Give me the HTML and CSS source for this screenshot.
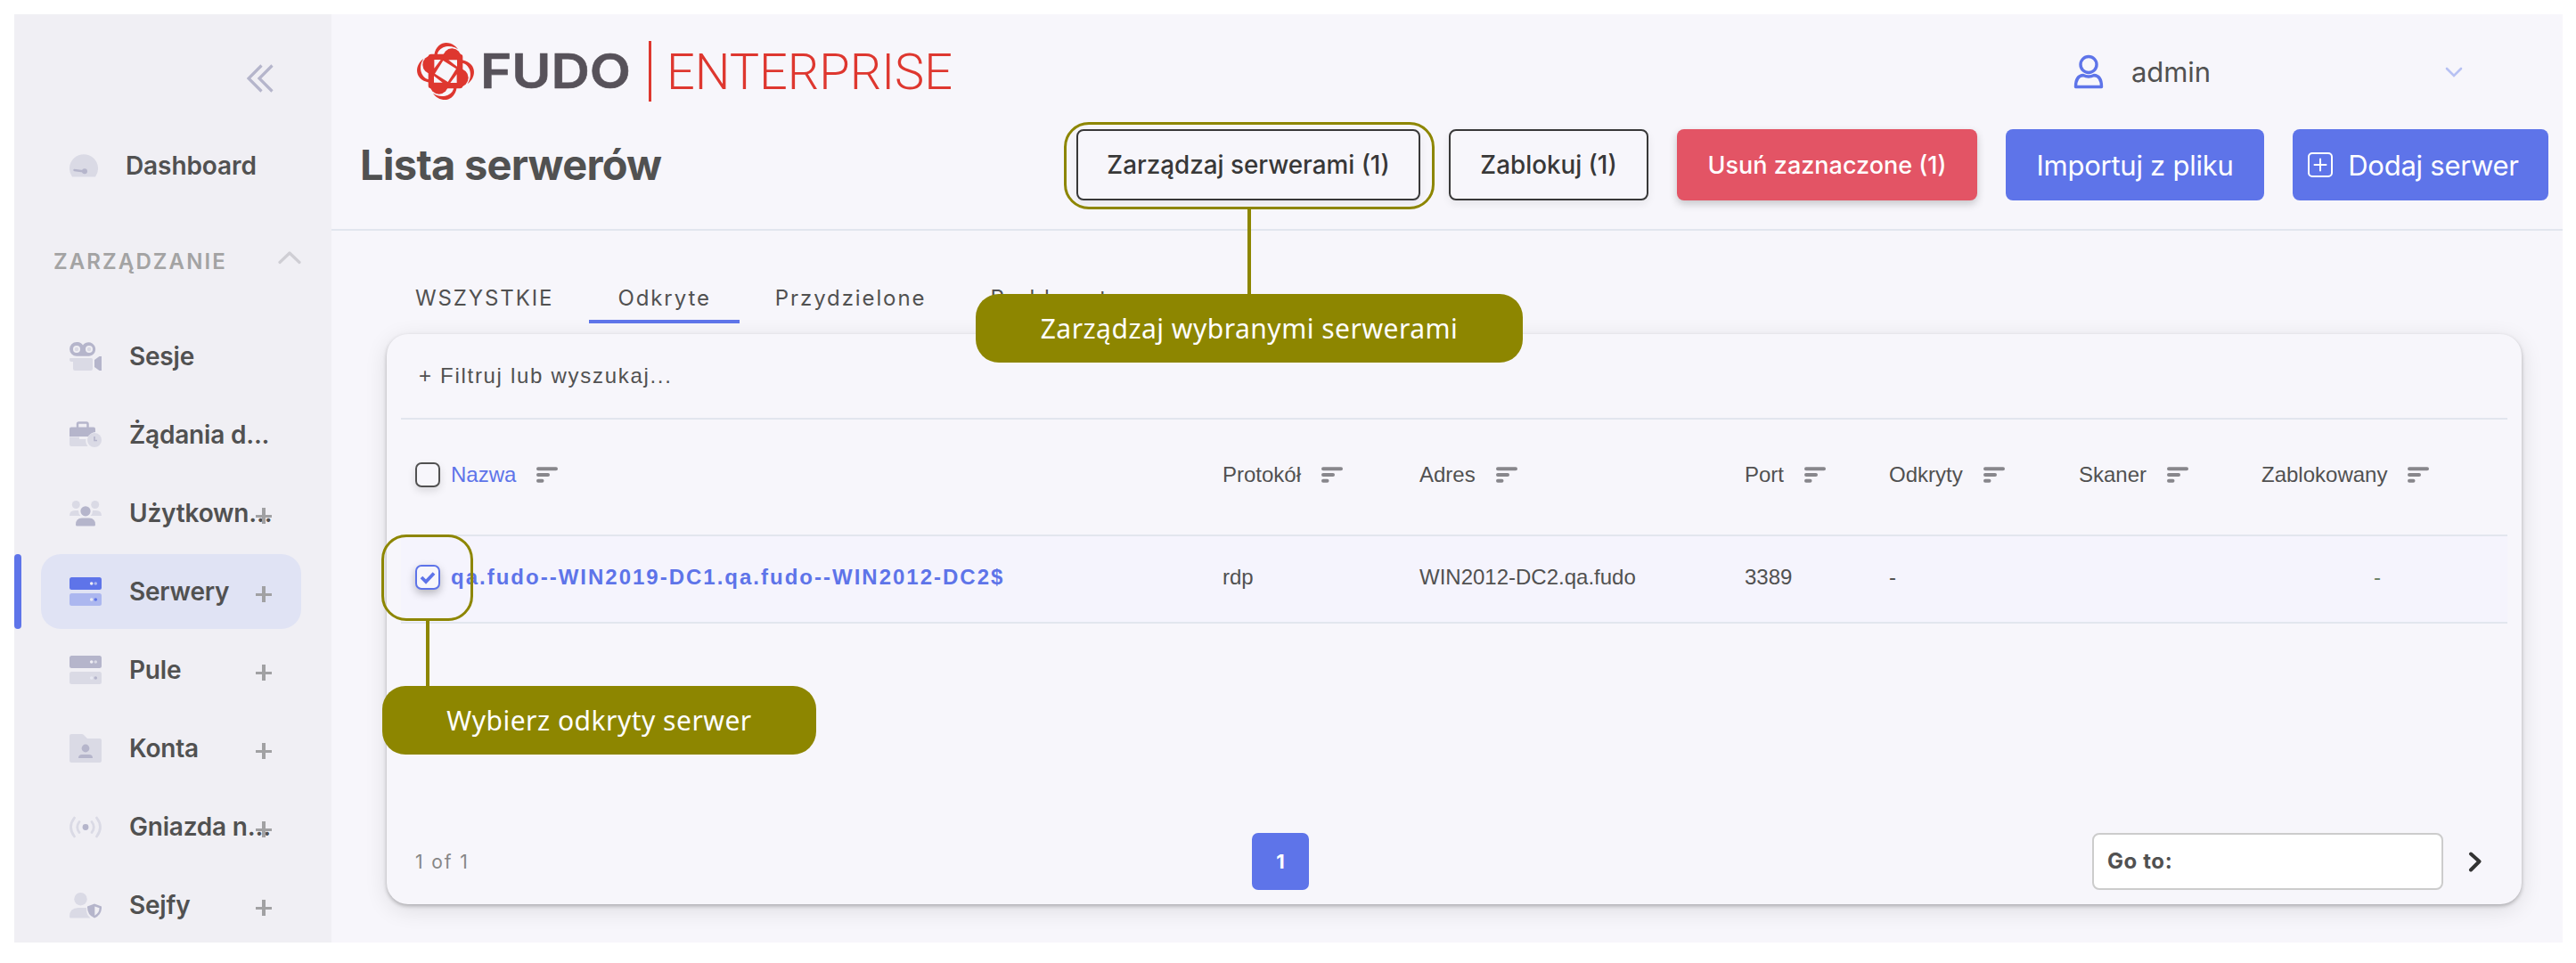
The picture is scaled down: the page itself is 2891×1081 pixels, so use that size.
FILE: index.html
```html
<!DOCTYPE html>
<html lang="pl">
<head>
	<meta charset="utf-8">
	<title>Lista serwerów</title>
	<link rel="stylesheet" href="styles.css">
</head>
<body>
<!-- shared icons -->
<svg class="defs" width="0" height="0">
	<symbol id="sort" viewBox="0 0 24 18">
		<path d="M2 2.200H22M2 9H13M2 15.800H6.500" stroke="#88878c" stroke-width="4" stroke-linecap="round"/>
	</symbol>
	<symbol id="server" viewBox="0 0 36 32">
		<rect width="36" height="14" rx="2.5" fill="var(--dark)"/>
		<rect y="18" width="36" height="14" rx="2.5" fill="var(--light)"/>
		<circle cx="24.7" cy="7" r="1.8" fill="#f0eff5"/>
		<circle cx="29.3" cy="7" r="1.8" fill="var(--light)"/>
		<circle cx="24.7" cy="25" r="1.8" fill="#e7e8f2"/>
		<circle cx="29.3" cy="25" r="1.8" fill="var(--dark)"/>
	</symbol>
</svg>
<div class="app">
	<!-- sidebar -->
	<div class="sidebar">
		<div class="collapse">
			<svg width="30" height="32" viewBox="0 0 30 32" fill="none" stroke="#b5b5cb" stroke-width="3.2"><path d="M16.500 1.500L2 16L16.500 30.500M28.500 1.500L14 16L28.500 30.500"/></svg>
		</div>
		<a class="item dashboard">
			<svg width="32" height="26" viewBox="0 0 32 26"><path d="M3 25.500A16 16 0 1 1 29 25.500Z" fill="#dadae5"/><path d="M5.500 18L17 19.500" stroke="#b5b5cb" stroke-width="2.400" stroke-linecap="round"/><circle cx="17" cy="19.200" r="3" fill="#b5b5cb"/></svg>
			<span>Dashboard</span>
		</a>
		<div class="section">
			<span>ZARZĄDZANIE</span>
			<svg width="26" height="16" viewBox="0 0 26 16" fill="none" stroke="#cfced4" stroke-width="3.200" stroke-linecap="round" stroke-linejoin="round"><path d="M2 13.500L13 3L24 13.500"/></svg>
		</div>
		<div class="menu">
			<a class="item">
				<svg width="36" height="32" viewBox="0 0 36 32"><path d="M8 0a7.800 7.800 0 0 1 7 3.500A7.800 7.800 0 1 1 22 15.800H8A7.900 7.900 0 0 1 8 0Z" fill="#b5b5cb"/><circle cx="8" cy="8" r="4" fill="#f0eff4"/><circle cx="22" cy="8" r="4" fill="#f0eff4"/><circle cx="8" cy="8" r="2.200" fill="#dadae5"/><circle cx="22" cy="8" r="2.200" fill="#dadae5"/><path d="M1 18H24.500Q26 18 26 19.500V30Q26 32 24 32H6Q4 32 4 30V22H2Q0 22 0 20V19Q0 18 1 18Z" fill="#dadae5"/><path d="M28 20L33.500 16H36V32H33.500L28 28Z" fill="#b5b5cb"/></svg>
				<span>Sesje</span>
			</a>
			<a class="item">
				<svg width="36" height="30" viewBox="0 0 36 30"><path d="M9 7V3Q9 1.500 10.500 1.500H19Q20.500 1.500 20.500 3V7" fill="none" stroke="#b5b5cb" stroke-width="2.500"/><path d="M2 6.500H27Q29 6.500 29 8.500V12Q24 12.500 21 17H0V8.500Q0 6.500 2 6.500Z" fill="#b5b5cb"/><path d="M0 17.500H11V20H18.500Q17.500 24 20.500 28H2Q0 28 0 26Z" fill="#dadae5"/><circle cx="28" cy="21" r="8" fill="#dadae5"/><path d="M28 17V21.500H31" fill="none" stroke="#b5b5cb" stroke-width="1.600"/></svg>
				<span>Żądania d...</span>
			</a>
			<a class="item">
				<svg width="36" height="29" viewBox="0 0 36 29"><g fill="#dadae5"><circle cx="7.300" cy="4.500" r="4.500"/><circle cx="28.700" cy="4.500" r="4.500"/><path d="M0 17Q0 11 6 11H10Q10 15 12.500 17ZM36 17Q36 11 30 11H26Q26 15 23.500 17Z"/></g><g fill="#b5b5cb"><circle cx="18" cy="11.800" r="5.600"/><path d="M7 27Q7 19.500 14 19.500H22Q29 19.500 29 27Q29 28.500 27.500 28.500H8.500Q7 28.500 7 27Z"/></g></svg>
				<span>Użytkown...</span>
				<i class="plus"></i>
			</a>
			<a class="item active">
				<svg width="36" height="32"><use href="#server"/></svg>
				<span>Serwery</span>
				<i class="plus"></i>
			</a>
			<a class="item">
				<svg width="36" height="32"><use href="#server"/></svg>
				<span>Pule</span>
				<i class="plus"></i>
			</a>
			<a class="item">
				<svg width="36" height="32" viewBox="0 0 36 32"><path d="M2 0H14Q15 0 16 1L20 5H34Q36 5 36 7V30Q36 32 34 32H2Q0 32 0 30V2Q0 0 2 0Z" fill="#dadae5"/><circle cx="18" cy="16" r="4.400" fill="#b5b5cb"/><path d="M10 27Q10 23 14 23H22Q26 23 26 27Z" fill="#b5b5cb"/></svg>
				<span>Konta</span>
				<i class="plus"></i>
			</a>
			<a class="item">
				<svg width="36" height="25" viewBox="0 0 36 25" fill="none" stroke="#dadae5" stroke-width="2.800" stroke-linecap="round"><path d="M5.500 2Q-2.500 12.500 5.500 23M11 6.500Q6.500 12.500 11 18.500M25 6.500Q29.500 12.500 25 18.500M30.500 2Q38.500 12.500 30.500 23"/><circle cx="18" cy="12.500" r="3.400" fill="#b5b5cb" stroke="none"/></svg>
				<span>Gniazda n...</span>
				<i class="plus"></i>
			</a>
			<a class="item">
				<svg width="36" height="29" viewBox="0 0 36 29"><circle cx="12.500" cy="7.200" r="7.200" fill="#dadae5"/><path d="M0 27Q0 17 10 17H19Q18.500 25 23.500 28.500H1.500Q0 28.500 0 27Z" fill="#dadae5"/><path d="M28 12.500L36 15.500Q36.500 25 28 28.500Q19.500 25 20 15.500Z" fill="#b5b5cb"/><path d="M28.300 15.500L33.500 17.300Q33.500 23 28.300 25.700Z" fill="#f0eff4"/></svg>
				<span>Sejfy</span>
				<i class="plus"></i>
			</a>
		</div>
	</div>
	<!-- content -->
	<div class="main">
		<div class="topbar">
			<svg class="logo" width="604" height="72" viewBox="0 0 604 72">
				<g transform="translate(32 36) scale(.333)">
					<g fill="#de372f">
						<rect x="-58" y="-58" width="116" height="116" rx="10"/>
						<g id="petal"><circle cx="22" cy="-46" r="31"/><path d="M-38 -54C-34 -84 -14 -96 2 -96C18 -96 34 -87 42 -74C25 -86 6 -86 -8 -80C-21 -74 -27 -65 -28 -54Z"/></g>
						<use href="#petal" transform="rotate(90)"/>
						<use href="#petal" transform="rotate(180)"/>
						<use href="#petal" transform="rotate(270)"/>
					</g>
					<g fill="#f7f6fb">
						<path d="M-8 -36L36 -8L8 36L-36 8Z"/>
						<path id="notch" d="M-38 -39L-16 -39L-38 -10Z"/>
						<use href="#notch" transform="rotate(90)"/>
						<use href="#notch" transform="rotate(180)"/>
						<use href="#notch" transform="rotate(270)"/>
					</g>
				</g>
				<text class="fudo" x="71" y="55" textLength="169" lengthAdjust="spacingAndGlyphs">FUDO</text>
				<rect x="260" y="2" width="3" height="68" fill="#de372f"/>
				<text class="edition" x="280" y="56" textLength="321" lengthAdjust="spacingAndGlyphs">ENTERPRISE</text>
			</svg>
			<div class="user">
				<svg width="34" height="40" viewBox="0 0 34 40" fill="none" stroke="#5e74e9" stroke-width="3.400" stroke-linejoin="round"><circle cx="17" cy="11.500" r="9"/><path d="M11 23.500Q17 26.500 23 23.500Q31.500 24 31.500 36.500H2.500Q2.500 24 11 23.500Z"/></svg>
				<span>admin</span>
				<svg class="arrow" width="20" height="12" viewBox="0 0 20 12" fill="none" stroke="#b7c1f3" stroke-width="2.600" stroke-linecap="round"><path d="M2 2L10 10L18 2"/></svg>
			</div>
		</div>
		<div class="titlebar">
			<h1>Lista serwerów</h1>
			<div class="buttons">
				<button class="btn outline manage">Zarządzaj serwerami (1)</button>
				<button class="btn outline block">Zablokuj (1)</button>
				<button class="btn danger">Usuń zaznaczone (1)</button>
				<button class="btn primary import">Importuj z pliku</button>
				<button class="btn primary add">
					<svg width="28" height="28" viewBox="0 0 28 28" fill="none" stroke="#fff" stroke-width="2" stroke-linecap="round"><rect x="1" y="1" width="26" height="26" rx="4"/><path d="M14 7.500V20.500M7.500 14H20.500"/></svg>
					<span>Dodaj serwer</span>
				</button>
			</div>
		</div>
		<div class="tabs">
			<a class="tab all">WSZYSTKIE</a>
			<a class="tab on">Odkryte</a>
			<a class="tab">Przydzielone</a>
			<a class="tab">Problematyczne</a>
		</div>
		<div class="card">
			<div class="filter">+ Filtruj lub wyszukaj...</div>
			<table>
				<colgroup><col class="c1"><col class="c2"><col class="c3"><col class="c4"><col class="c5"><col class="c6"><col class="c7"></colgroup>
				<tr class="head">
					<th><div class="cell first"><i class="check"></i><span class="sorted">Nazwa</span><svg><use href="#sort"/></svg></div></th>
					<th><div class="cell">Protokół<svg><use href="#sort"/></svg></div></th>
					<th><div class="cell">Adres<svg><use href="#sort"/></svg></div></th>
					<th><div class="cell">Port<svg><use href="#sort"/></svg></div></th>
					<th><div class="cell">Odkryty<svg><use href="#sort"/></svg></div></th>
					<th><div class="cell">Skaner<svg><use href="#sort"/></svg></div></th>
					<th><div class="cell">Zablokowany<svg><use href="#sort"/></svg></div></th>
				</tr>
				<tr class="row">
					<td><div class="cell first"><i class="check checked"><svg viewBox="0 0 24 24"><path d="M5 12L10 17L19 7.500" fill="none" stroke="#5e74e9" stroke-width="3.800"/></svg></i><span class="name">qa.fudo--WIN2019-DC1.qa.fudo--WIN2012-DC2$</span></div></td>
					<td>rdp</td>
					<td>WIN2012-DC2.qa.fudo</td>
					<td>3389</td>
					<td>-</td>
					<td></td>
					<td class="blocked">-</td>
				</tr>
			</table>
			<div class="pager">
				<span class="count">1 of 1</span>
				<span class="page">1</span>
				<div class="goto">
					<div class="field">Go to:</div>
					<svg width="16" height="24" viewBox="0 0 16 24" fill="none" stroke="#333" stroke-width="4" stroke-linecap="round" stroke-linejoin="round"><path d="M3 3.500L12.500 12L3 21.500"/></svg>
				</div>
			</div>
		</div>
	</div>
</div>
<!-- callouts -->
<div class="ring ring-manage"></div>
<div class="stem stem-manage"></div>
<div class="bubble bubble-manage">Zarządzaj wybranymi serwerami</div>
<div class="ring ring-check"></div>
<div class="stem stem-check"></div>
<div class="bubble bubble-check">Wybierz odkryty serwer</div>
</body>
</html>
```
FILE: styles.css
```css
* {
	box-sizing: border-box;
}
body {
	position: relative;
	margin: 0;
	padding: 16px 15px 23px 16px;
	height: 1081px;
	background: #fff;
	color: #515151;
	font-family: Inter, "Liberation Sans", sans-serif;
}
svg {
	flex: none;
}
.defs {
	position: absolute;
}
.app {
	display: flex;
	height: 1042px;
	overflow: hidden;
	background: #f7f6fb;
}

/* sidebar */
.sidebar {
	width: 356px;
	flex: none;
	background: #f0eff4;
	--dark: #b5b5cb;
	--light: #dadae5;
}
.collapse {
	display: flex;
	justify-content: flex-end;
	padding: 56px 65px 0 0;
	height: 128px;
}
.item {
	position: relative;
	display: flex;
	align-items: center;
	height: 84px;
	margin: 0 34px 4px 30px;
	padding-left: 32px;
	border-radius: 22px;
	font-size: 28px;
	font-weight: 600;
	letter-spacing: -0.2px;
	white-space: nowrap;
}
.item span {
	margin-left: 31px;
}
.dashboard {
	margin-bottom: 0;
}
.dashboard span {
	letter-spacing: -0.1px;
}
.section {
	display: flex;
	align-items: center;
	justify-content: space-between;
	height: 130px;
	padding: 0 34px 0 44px;
	color: #a3a3a3;
	font-size: 24px;
	font-weight: 600;
	letter-spacing: 2.1px;
}
.section svg {
	margin-top: -9px;
}
.active {
	background: #e0e3f4;
	--dark: #5e74e9;
	--light: #acb7ef;
}
.active::before {
	content: "";
	position: absolute;
	left: -30px;
	top: 0;
	width: 8px;
	height: 84px;
	border-radius: 4px;
	background: #5e74e9;
}
.plus {
	position: absolute;
	right: 33px;
	top: 36px;
	width: 18px;
	height: 18px;
	background: linear-gradient(#a1a1a3, #a1a1a3) center / 18px 3px no-repeat, linear-gradient(#a1a1a3, #a1a1a3) center / 4px 18px no-repeat;
}

/* header */
.main {
	flex: 1;
}
.topbar {
	display: flex;
	justify-content: space-between;
	height: 129px;
	padding: 28px 112px 0 96px;
}
.fudo {
	font: 600 54px Inter, sans-serif;
	fill: #57525a;
	stroke: #57525a;
	stroke-width: .6px;
}
.edition {
	font: 300 56px Roboto, sans-serif;
	fill: #de372f;
}
.user {
	display: flex;
	align-items: center;
	width: 437px;
	height: 73px;
	font-size: 31px;
}
.user span {
	margin-left: 31px;
	letter-spacing: -0.1px;
}
.user .arrow {
	margin-left: auto;
}
.titlebar {
	display: flex;
	justify-content: space-between;
	height: 114px;
	padding: 0 16px 0 32px;
	border-bottom: 2px solid #e2e6ee;
}
h1 {
	margin: 0;
	font-size: 47px;
	line-height: 80px;
	letter-spacing: -0.75px;
}
.buttons {
	display: flex;
	gap: 32px;
}
.btn {
	display: flex;
	align-items: center;
	justify-content: center;
	height: 80px;
	padding: 0;
	border: 0;
	border-radius: 8px;
	font-family: inherit;
	font-size: 27px;
	font-weight: 500;
	color: #fff;
	white-space: nowrap;
}
.outline {
	border: 2px solid #383838;
	background: none;
	color: #383838;
	font-size: 27.8px;
	box-shadow: 0 4px 10px rgba(0, 0, 0, .07);
}
.manage {
	width: 386px;
}
.block {
	width: 224px;
}
.danger {
	width: 337px;
	background: #e35465;
	box-shadow: 0 4px 10px rgba(0, 0, 0, .2);
}
.primary {
	background: #5e74e9;
	font-size: 31px;
	font-weight: 400;
	letter-spacing: -0.25px;
}
.import {
	width: 290px;
}
.add {
	width: 287px;
	gap: 17px;
	padding-right: 16px;
}

/* tabs */
.tabs {
	display: flex;
	gap: 8px;
	padding: 50px 0 12px 62px;
}
.tab {
	height: 54px;
	padding: 0 32px;
	border-bottom: 4px solid transparent;
	font-size: 24px;
	line-height: 51px;
	letter-spacing: 1.9px;
}
.on {
	border-color: #5e74e9;
}

/* card */
.card {
	display: flex;
	flex-direction: column;
	width: 2396px;
	height: 640px;
	margin-left: 62px;
	padding: 0 16px 16px;
	border-radius: 24px;
	box-shadow: 0 2px 4px rgba(0, 0, 0, .25), 0 6px 26px rgba(0, 0, 0, .11);
}
.filter {
	height: 96px;
	padding-left: 20px;
	border-bottom: 2px solid #e2e6ee;
	font: 24px/93px "Liberation Sans", sans-serif;
	letter-spacing: 1.7px;
}
table {
	width: 2364px;
	table-layout: fixed;
	border-collapse: collapse;
	font: 24px "Liberation Sans", sans-serif;
}
.c1 { width: 922px; }
.c2 { width: 221px; }
.c3 { width: 365px; }
.c4 { width: 162px; }
.c5 { width: 213px; }
.c6 { width: 205px; }
th, td {
	padding: 0 0 5px;
	border-bottom: 2px solid #e2e6ee;
	text-align: left;
	font-weight: normal;
}
th {
	height: 130px;
}
td {
	height: 98px;
	background: #f5f4fd;
}
.cell {
	display: flex;
	align-items: center;
}
.cell > svg {
	width: 24px;
	height: 18px;
	margin-left: 23px;
}
.first {
	padding-left: 16px;
}
.check {
	width: 28px;
	height: 28px;
	margin-right: 12px;
	border: 2px solid #515151;
	border-radius: 7px;
	box-shadow: 0 4px 10px rgba(0, 0, 0, .12);
}
.checked {
	border-color: #5e74e9;
	background: #f7f6fb;
	box-shadow: 0 4px 10px rgba(0, 0, 0, .25);
}
.checked svg {
	display: block;
}
.sorted {
	color: #5e74e9;
}
.name {
	color: #5e74e9;
	font-size: 24px;
	font-weight: bold;
	letter-spacing: 2px;
}
.blocked {
	padding-left: 126px;
	color: #6c8268;
}
.pager {
	display: grid;
	grid-template-columns: 955px 64px 1fr;
	align-items: center;
	height: 64px;
	margin-top: auto;
}
.count {
	padding-left: 16px;
	color: #868686;
	font-size: 21px;
	letter-spacing: 1.9px;
}
.page {
	height: 64px;
	border-radius: 7px;
	background: #5e74e9;
	color: #fff;
	font-size: 22px;
	font-weight: 700;
	line-height: 64px;
	text-align: center;
}
.goto {
	display: flex;
	align-items: center;
	justify-content: flex-end;
	gap: 28px;
	padding-right: 28px;
}
.field {
	width: 394px;
	height: 64px;
	padding-left: 15px;
	border: 2px solid #ccc;
	border-radius: 8px;
	background: #fff;
	font-size: 24px;
	font-weight: 700;
	line-height: 60px;
	letter-spacing: 0.6px;
}

/* callouts */
.ring, .stem, .bubble {
	position: absolute;
}
.ring {
	border: 3px solid #8d8600;
	border-radius: 28px;
}
.stem {
	width: 4px;
	background: #8d8600;
}
.bubble {
	height: 77px;
	border-radius: 26px;
	background: #8d8600;
	color: #fff;
	font: 30px/77px "Noto Sans", sans-serif;
	letter-spacing: 0.5px;
	text-align: center;
	white-space: nowrap;
}
.ring-manage {
	left: 1194px;
	top: 137px;
	width: 416px;
	height: 98px;
}
.stem-manage {
	left: 1400px;
	top: 234px;
	height: 97px;
}
.bubble-manage {
	left: 1095px;
	top: 330px;
	width: 614px;
}
.ring-check {
	left: 428px;
	top: 600px;
	width: 103px;
	height: 97px;
}
.stem-check {
	left: 478px;
	top: 696px;
	height: 75px;
}
.bubble-check {
	left: 429px;
	top: 770px;
	width: 487px;
}
```
